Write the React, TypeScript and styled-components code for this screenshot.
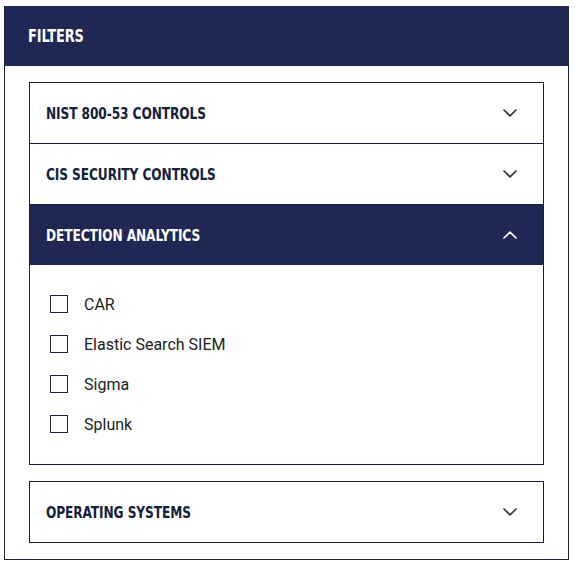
import React from "react";
import styled, { createGlobalStyle } from "styled-components";

const GlobalStyle = createGlobalStyle`
  body {
    margin: 0;
    background: #ffffff;
  }
`;

const Page = styled.div`
  padding: 6px 6px 8px 4px;
`;

const Panel = styled.section`
  width: 565px;
  box-sizing: border-box;
  border: 1px solid #1a2333;
  border-top: none;
  background: #fff;
`;

// condensed heading face: no narrow family is installed, so squeeze DejaVu Condensed
const Title = styled.span<{ $size?: number }>`
  display: inline-block;
  font-family: "DejaVu Sans Condensed", "Liberation Sans", sans-serif;
  font-weight: 700;
  font-size: ${(p) => p.$size ?? 16}px;
  letter-spacing: -0.1px;
  transform: scaleX(0.845);
  transform-origin: left center;
  white-space: nowrap;
`;

const PanelHeader = styled.header`
  height: 60px;
  display: flex;
  align-items: center;
  padding-left: 24px;
  margin: 0 -1px;
  background: #1f2752;
  color: #fff;
`;

const PanelBody = styled.div`
  display: flex;
  flex-direction: column;
  gap: 16px;
  padding: 16px 24px 16px 24px;
`;

const Group = styled.div`
  border: 1px solid #14203a;
`;

const ItemHeader = styled.button<{ $open?: boolean; $divider?: boolean }>`
  all: unset;
  box-sizing: border-box;
  width: 100%;
  height: ${(p) => (p.$divider ? "61px" : "60px")};
  display: flex;
  align-items: center;
  justify-content: space-between;
  padding: 0 26px 0 16px;
  border-top: ${(p) => (p.$divider ? "1px solid #14203a" : "none")};
  background: ${(p) => (p.$open ? "#1f2752" : "#fff")};
  color: ${(p) => (p.$open ? "#fff" : "#13213a")};
`;

const Content = styled.div`
  padding: 19px 16px 20px 20px;
`;

const Option = styled.label`
  height: 40px;
  display: flex;
  align-items: center;
  gap: 16px;
  font-family: Roboto, "Liberation Sans", sans-serif;
  font-size: 16px;
  color: #222;
`;

const Box = styled.span`
  width: 18px;
  height: 18px;
  box-sizing: border-box;
  border: 1px solid #1b2236;
  background: #fff;
`;

const Chevron = ({ up }: { up?: boolean }) => (
  <svg width="14" height="8" viewBox="0 0 14 8" fill="none">
    <polyline
      points={up ? "1,7 7,1.2 13,7" : "1,1 7,6.8 13,1"}
      stroke="currentColor"
      strokeWidth="1.7"
      strokeLinecap="round"
      strokeLinejoin="round"
    />
  </svg>
);

const ChevronWrap = styled.span<{ $open?: boolean }>`
  display: flex;
  color: ${(p) => (p.$open ? "#fff" : "#2c3442")};
`;

const options = ["CAR", "Elastic Search SIEM", "Sigma", "Splunk"];

const Item = ({ title, open, divider }: { title: string; open?: boolean; divider?: boolean }) => (
  <>
    <ItemHeader $open={open} $divider={divider}>
      <Title>{title}</Title>
      <ChevronWrap $open={open}>
        <Chevron up={open} />
      </ChevronWrap>
    </ItemHeader>
    {open && (
      <Content>
        {options.map((o) => (
          <Option key={o}>
            <Box />
            {o}
          </Option>
        ))}
      </Content>
    )}
  </>
);

export default function App() {
  return (
    <Page>
      <GlobalStyle />
      <Panel>
        <PanelHeader>
          <Title $size={17}>FILTERS</Title>
        </PanelHeader>
        <PanelBody>
          <Group>
            <Item title="NIST 800-53 CONTROLS" />
            <Item title="CIS SECURITY CONTROLS" divider />
            <Item title="DETECTION ANALYTICS" open divider />
          </Group>
          <Group>
            <Item title="OPERATING SYSTEMS" />
          </Group>
        </PanelBody>
      </Panel>
    </Page>
  );
}
